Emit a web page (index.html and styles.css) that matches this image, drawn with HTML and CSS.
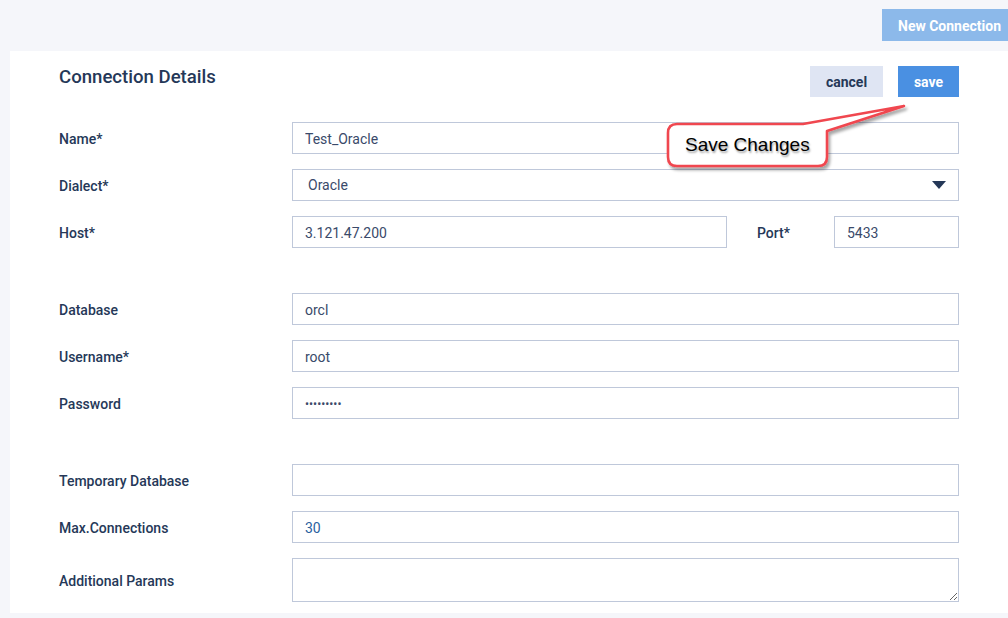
FILE: index.html
```html
<!DOCTYPE html>
<html>
<head>
<meta charset="utf-8">
<link rel="stylesheet" href="styles.css">
</head>
<body>
<div class="topbar">
  <button class="btn btn-new">New Connection</button>
</div>
<div class="card">
  <div class="card-head">
    <h2 class="title">Connection Details</h2>
    <div class="actions">
      <button class="btn btn-cancel">cancel</button>
      <button class="btn btn-save">save</button>
    </div>
  </div>
  <div class="form">
    <div class="row">
      <label class="lbl">Name*</label>
      <input class="field" type="text" value="Test_Oracle">
    </div>
    <div class="row">
      <label class="lbl">Dialect*</label>
      <div class="field select">
        <span class="select-val">Oracle</span>
        <svg class="caret" width="14" height="8" viewBox="0 0 14 8"><path d="M0 0 H14 L7 8 Z" fill="#253858"/></svg>
      </div>
    </div>
    <div class="row">
      <label class="lbl">Host*</label>
      <div class="host-line">
        <input class="field host" type="text" value="3.121.47.200">
        <label class="lbl port-lbl">Port*</label>
        <input class="field port" type="text" value="5433">
      </div>
    </div>
    <div class="row group">
      <label class="lbl">Database</label>
      <input class="field" type="text" value="orcl">
    </div>
    <div class="row">
      <label class="lbl">Username*</label>
      <input class="field" type="text" value="root">
    </div>
    <div class="row">
      <label class="lbl">Password</label>
      <input class="field pwd" type="password" value="123456789">
    </div>
    <div class="row group">
      <label class="lbl">Temporary Database</label>
      <input class="field" type="text" value="">
    </div>
    <div class="row">
      <label class="lbl">Max.Connections</label>
      <input class="field num" type="text" value="30">
    </div>
    <div class="row row-area">
      <label class="lbl">Additional Params</label>
      <textarea class="field area"></textarea>
    </div>
  </div>
  <div class="callout">
    <svg class="callout-shape" width="260" height="80" viewBox="0 0 260 80">
      <defs>
        <filter id="sh" x="-10%" y="-20%" width="130%" height="150%">
          <feDropShadow dx="2" dy="3" stdDeviation="1.6" flood-color="#000" flood-opacity="0.35"/>
        </filter>
      </defs>
      <path d="M17 24 L143 24 L244 6 L167 31 L167 57 Q167 66 158 66 L17 66 Q8 66 8 57 L8 33 Q8 24 17 24 Z" fill="#fff" stroke="#f0474f" stroke-width="2.6" stroke-linejoin="round" filter="url(#sh)"/>
    </svg>
    <span class="callout-text">Save Changes</span>
  </div>
</div>
</body>
</html>
```
FILE: styles.css
```css
* { box-sizing: border-box; }
html, body { margin: 0; padding: 0; }
body {
  background: #f5f6fa;
  font-family: Roboto, "Liberation Sans", sans-serif;
  color: #253858;
  width: 1008px;
  height: 618px;
  overflow: hidden;
}
.topbar {
  height: 51px;
  padding-top: 9px;
  display: flex;
  justify-content: flex-end;
  align-items: flex-start;
}
.btn {
  border: none;
  font-family: Roboto, "Liberation Sans", sans-serif;
  font-weight: 700;
  font-size: 14px;
  height: 32px;
  padding: 0;
  cursor: pointer;
}
.btn-new {
  background: #8cb9ea;
  color: #fff;
  width: 126px;
  text-align: left;
  padding-left: 16px;
  padding-top: 1px;
}
.card {
  position: relative;
  margin-left: 10px;
  background: #fff;
  padding: 15px 49px 11px 49px;
  height: 562px;
}
.card-head {
  display: flex;
  justify-content: space-between;
  align-items: flex-start;
  height: 31px;
}
.title {
  margin: 0;
  font-size: 18.6px;
  font-weight: 500;
  color: #253858;
  line-height: 22px;
}
.actions {
  display: flex;
  gap: 15px;
}
.btn-cancel {
  background: #dfe5f3;
  color: #253858;
  width: 73px;
  height: 31px;
}
.btn-save {
  background: #4a90e2;
  color: #fff;
  width: 61px;
  height: 31px;
}
.form {
  margin-top: 25px;
  display: flex;
  flex-direction: column;
  gap: 15px;
}
.row {
  display: grid;
  grid-template-columns: 233px 1fr;
  align-items: center;
  height: 32px;
}
.row.group { margin-top: 30px; }
.row-area { height: 44px; }
.lbl {
  font-size: 14px;
  font-weight: 500;
  color: #253858;
  padding-top: 2px;
}
.field {
  height: 32px;
  width: 100%;
  border: 1px solid #bfc8da;
  background: #fff;
  padding: 2px 12px 0 12px;
  font-family: Roboto, "Liberation Sans", sans-serif;
  font-size: 14px;
  color: #3a4a6a;
  outline: none;
  margin: 0;
}
.select {
  display: flex;
  align-items: center;
  justify-content: space-between;
  padding: 0 12px 0 15px;
}
.caret { display: block; }
.host-line {
  display: flex;
  align-items: center;
}
.host { width: 435px; flex: none; }
.port-lbl { width: 77px; margin-left: 30px; flex: none; padding-top: 2px; }
.port { width: 125px; flex: none; }
.pwd { font-size: 12px; letter-spacing: 0; color: #3a4a6a; }
.num { color: #2a5f9e; }
.area {
  height: 44px;
  resize: vertical;
  padding: 8px 12px;
}
.callout {
  position: absolute;
  left: 650px;
  top: 49px;
  width: 260px;
  height: 80px;
}
.callout-shape {
  position: absolute;
  left: 0;
  top: 0;
}
.callout-text {
  position: absolute;
  left: 25px;
  top: 34px;
  font-family: "Liberation Sans", Arial, sans-serif;
  font-size: 19px;
  color: #000;
  text-shadow: 1px 2px 2px rgba(0,0,0,0.35);
  white-space: nowrap;
}
```
